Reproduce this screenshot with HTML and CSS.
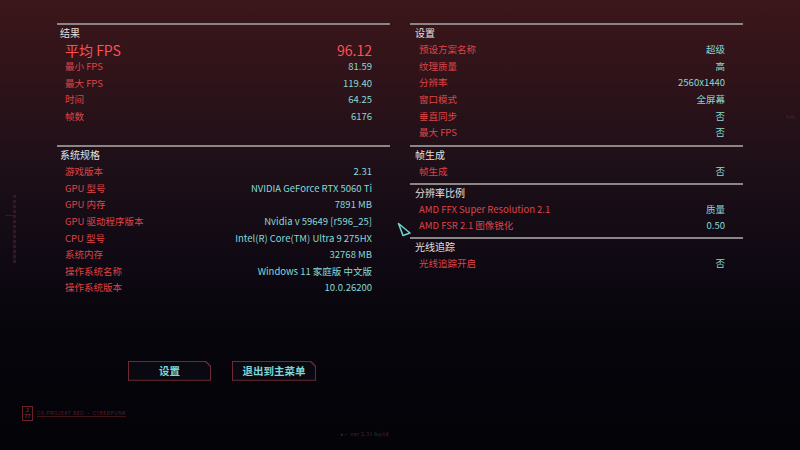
FILE: index.html
```html
<!DOCTYPE html>
<html lang="zh-CN">
<head>
    <meta charset="UTF-8">
    <meta name="viewport" content="width=device-width, initial-scale=1.0">
    <title>基准测试结果</title>
    <link rel="stylesheet" href="styles.css">
</head>
<body>
    <div class="side-mark">
        <span class="side-tick"></span>
        <span class="side-bar"></span>
    </div>
    <span class="edge-note">%%</span>

    <div class="screen">
        <div class="columns">
            <div class="column">
                <div class="section first">
                    <div class="section-title">结果</div>
                    <div class="row big"><span class="label">平均 FPS</span><span class="value">96.12</span></div>
                    <div class="row"><span class="label">最小 FPS</span><span class="value">81.59</span></div>
                    <div class="row"><span class="label">最大 FPS</span><span class="value">119.40</span></div>
                    <div class="row"><span class="label">时间</span><span class="value">64.25</span></div>
                    <div class="row"><span class="label">帧数</span><span class="value">6176</span></div>
                </div>
                <div class="section">
                    <div class="section-title">系统规格</div>
                    <div class="row"><span class="label">游戏版本</span><span class="value">2.31</span></div>
                    <div class="row"><span class="label">GPU 型号</span><span class="value">NVIDIA GeForce RTX 5060 Ti</span></div>
                    <div class="row"><span class="label">GPU 内存</span><span class="value">7891 MB</span></div>
                    <div class="row"><span class="label">GPU 驱动程序版本</span><span class="value">Nvidia v 59649 [r596_25]</span></div>
                    <div class="row"><span class="label">CPU 型号</span><span class="value">Intel(R) Core(TM) Ultra 9 275HX</span></div>
                    <div class="row"><span class="label">系统内存</span><span class="value">32768 MB</span></div>
                    <div class="row"><span class="label">操作系统名称</span><span class="value">Windows 11 家庭版 中文版</span></div>
                    <div class="row"><span class="label">操作系统版本</span><span class="value">10.0.26200</span></div>
                </div>
            </div>

            <div class="column right">
                <div class="section first">
                    <div class="section-title">设置</div>
                    <div class="row"><span class="label">预设方案名称</span><span class="value">超级</span></div>
                    <div class="row"><span class="label">纹理质量</span><span class="value">高</span></div>
                    <div class="row"><span class="label">分辨率</span><span class="value">2560x1440</span></div>
                    <div class="row"><span class="label">窗口模式</span><span class="value">全屏幕</span></div>
                    <div class="row"><span class="label">垂直同步</span><span class="value">否</span></div>
                    <div class="row"><span class="label">最大 FPS</span><span class="value">否</span></div>
                </div>
                <div class="section">
                    <div class="section-title">帧生成</div>
                    <div class="row"><span class="label">帧生成</span><span class="value">否</span></div>
                </div>
                <div class="section">
                    <div class="section-title">分辨率比例</div>
                    <div class="row"><span class="label">AMD FFX Super Resolution 2.1</span><span class="value">质量</span></div>
                    <div class="row"><span class="label">AMD FSR 2.1 图像锐化</span><span class="value">0.50</span></div>
                </div>
                <div class="section">
                    <div class="section-title">光线追踪</div>
                    <div class="row"><span class="label">光线追踪开启</span><span class="value">否</span></div>
                </div>
            </div>
        </div>

        <div class="buttons">
            <button class="hud-btn"><span>设置</span></button>
            <button class="hud-btn wide"><span>退出到主菜单</span></button>
        </div>

        <div class="footer">
            <div class="brand">
                <span class="brand-box">2<br>77</span>
                <span class="brand-line">CD PROJEKT RED · CYBERPUNK</span>
            </div>
            <div class="build">◂— ver 2.31 build</div>
        </div>
    </div>

    <svg class="cursor" width="16" height="16" viewBox="0 0 16 16">
        <polygon points="1.5,1.5 13,11 6,13.5" fill="none" stroke="#6fd3c9" stroke-width="1.6" stroke-linejoin="round"/>
    </svg>
</body>
</html>
```

FILE: styles.css
```css
body {
    margin: 0;
    width: 800px;
    height: 450px;
    overflow: hidden;
    position: relative;
    font-family: "Noto Sans CJK SC", "Noto Sans", sans-serif;
    background: linear-gradient(to bottom, #3c161a 0%, #2e1319 18%, #1d0f18 38%, #0f0913 58%, #06050b 75%, #040308 100%);
    color: #d9d9d9;
}

.screen {
    padding: 23px 0 0 57px;
}

.columns {
    display: flex;
    gap: 20px;
}

.column {
    width: 333px;
}

.section {
    border-top: 2px solid #8a8688;
    padding-bottom: 3px;
}

.section.first {
    min-height: 117px;
}

.section-title {
    height: 16px;
    line-height: 16px;
    font-size: 10px;
    padding-left: 3px;
    color: #e2e0e0;
}

.right .section-title {
    padding-left: 5px;
}

.row {
    display: flex;
    justify-content: space-between;
    align-items: center;
    height: 16.6px;
    font-size: 9.5px;
    padding: 0 18px 0 8px;
}

.right .row {
    padding-left: 9px;
}

.label {
    color: #de4448;
}

.value {
    color: #86d9d6;
}

.row.big {
    height: 17px;
    font-size: 14px;
}

.row.big .label,
.row.big .value {
    color: #ff4f52;
}

.buttons {
    display: flex;
    gap: 21px;
    margin: 62px 0 0 71px;
}

.hud-btn {
    width: 83px;
    height: 20px;
    padding: 1px;
    border: none;
    background: #6e2a30;
    clip-path: polygon(0 0, calc(100% - 5px) 0, 100% 5px, 100% 100%, 0 100%);
    cursor: pointer;
}

.hud-btn span {
    display: flex;
    align-items: center;
    justify-content: center;
    height: 100%;
    background: #0a0911;
    clip-path: polygon(0 0, calc(100% - 5px) 0, 100% 5px, 100% 100%, 0 100%);
    color: #7fd6d4;
    font-family: "Noto Sans CJK SC", sans-serif;
    font-size: 10.5px;
    font-weight: bold;
}

.hud-btn.wide {
    width: 84px;
}

.footer {
    height: 60px;
}

.brand {
    display: flex;
    align-items: center;
    gap: 4px;
    margin: 25px 0 0 -35px;
}

.brand-box {
    border: 1px solid #6b2328;
    color: #7d2a30;
    font-size: 5px;
    line-height: 6px;
    width: 9px;
    height: 13px;
    text-align: center;
    font-weight: bold;
}

.brand-line {
    color: #5e1d23;
    font-size: 5px;
    letter-spacing: 0.5px;
    border-bottom: 1px solid #3d1419;
}

.build {
    color: #4a2a33;
    font-size: 5px;
    margin: 9px 0 0 283px;
    letter-spacing: 0.5px;
}

.side-mark {
    position: absolute;
    left: 5px;
    top: 195px;
    width: 12px;
    height: 68px;
}

.side-tick {
    position: absolute;
    left: 0;
    top: 20px;
    width: 9px;
    height: 1px;
    background: #33192a;
}

.side-bar {
    position: absolute;
    left: 8px;
    top: 0;
    width: 3px;
    height: 68px;
    background: repeating-linear-gradient(to bottom, #33182a 0, #33182a 3px, #180c17 3px, #180c17 5px);
}

.edge-note {
    position: absolute;
    left: 786px;
    top: 113px;
    font-size: 5px;
    color: #4a2a34;
}

.cursor {
    position: absolute;
    left: 397px;
    top: 222px;
}
```
